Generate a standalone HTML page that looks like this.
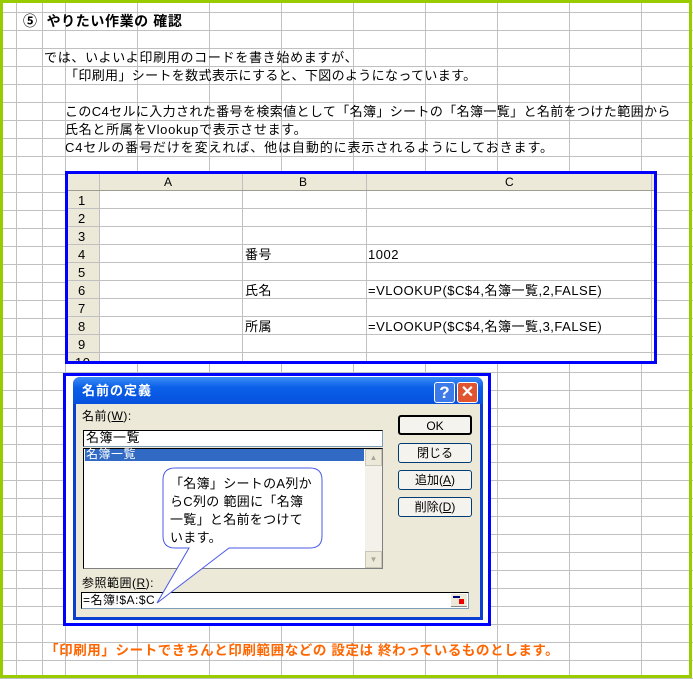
<!DOCTYPE html>
<html><head><meta charset="utf-8"><style>
*{margin:0;padding:0;box-sizing:border-box}
body{width:693px;height:679px;overflow:hidden;background:#fff;position:relative;font-family:"Liberation Sans","Noto Sans CJK JP",sans-serif;font-size:13px;color:#000}
.a{position:absolute;white-space:nowrap;line-height:16px;letter-spacing:0.5px}
.btn{position:absolute;left:398px;width:74px;height:20px;background:#F4F3EE;border:1px solid #003C74;border-radius:3px;text-align:center;line-height:18px;font-size:12px}
</style></head><body>
<svg width="693" height="679" style="position:absolute;left:0;top:0">
<g stroke="#C0C0C0" stroke-width="1">
<line x1="16.5" y1="0" x2="16.5" y2="679"/><line x1="42.5" y1="0" x2="42.5" y2="679"/><line x1="65.5" y1="0" x2="65.5" y2="679"/>
<line x1="137.5" y1="0" x2="137.5" y2="679"/><line x1="209.5" y1="0" x2="209.5" y2="679"/><line x1="281.5" y1="0" x2="281.5" y2="679"/><line x1="353.5" y1="0" x2="353.5" y2="679"/><line x1="425.5" y1="0" x2="425.5" y2="679"/><line x1="497.5" y1="0" x2="497.5" y2="679"/><line x1="569.5" y1="0" x2="569.5" y2="679"/><line x1="641.5" y1="0" x2="641.5" y2="679"/>
</g>
<g stroke="#C0C0C0" stroke-width="1" id="rows"></g>
<rect x="1.5" y="1.5" width="689" height="675" fill="none" stroke="#99CC00" stroke-width="3"/>
</svg>
<script>
var g=document.getElementById('rows'),s='';for(var n=0;n<=37;n++){var y=12+18*n+0.5;s+='<line x1="0" y1="'+y+'" x2="693" y2="'+y+'"/>';}g.innerHTML=s;
</script>
<div class="a" style="left:23px;top:13px;font-weight:bold;font-size:14px;letter-spacing:0.6px">⑤&nbsp; やりたい作業の 確認</div>
<div class="a" style="left:44px;top:50px;letter-spacing:0.7px">では、いよいよ印刷用のコードを書き始めますが、</div>
<div class="a" style="left:65px;top:68px;letter-spacing:0.35px">「印刷用」シートを数式表示にすると、下図のようになっています。</div>
<div class="a" style="left:65px;top:104px;letter-spacing:0.38px">このC4セルに入力された番号を検索値として「名簿」シートの「名簿一覧」と名前をつけた範囲から</div>
<div class="a" style="left:65px;top:122px;letter-spacing:0.7px">氏名と所属をVlookupで表示させます。</div>
<div class="a" style="left:65px;top:140px;letter-spacing:0.9px">C4セルの番号だけを変えれば、他は自動的に表示されるようにしておきます。</div>

<div style="position:absolute;left:65px;top:171px;width:592px;height:193px;border:3px solid #0000FF;background:#fff;overflow:hidden">
<svg width="586" height="187" style="position:absolute;left:0;top:0">
<rect x="0" y="0" width="586" height="16" fill="#ECE9D8"/>
<rect x="0" y="0" width="31" height="187" fill="#ECE9D8"/>
<g stroke="#C0C0C0"><line x1="0" y1="34.5" x2="586" y2="34.5"/><line x1="0" y1="52.5" x2="586" y2="52.5"/><line x1="0" y1="70.5" x2="586" y2="70.5"/><line x1="0" y1="88.5" x2="586" y2="88.5"/><line x1="0" y1="106.5" x2="586" y2="106.5"/><line x1="0" y1="124.5" x2="586" y2="124.5"/><line x1="0" y1="142.5" x2="586" y2="142.5"/><line x1="0" y1="160.5" x2="586" y2="160.5"/><line x1="0" y1="178.5" x2="586" y2="178.5"/>
<line x1="31.5" y1="0" x2="31.5" y2="187"/><line x1="174.5" y1="0" x2="174.5" y2="187"/><line x1="298.5" y1="0" x2="298.5" y2="187"/><line x1="583.5" y1="0" x2="583.5" y2="187"/></g>
<line x1="0" y1="16.5" x2="586" y2="16.5" stroke="#9D9D92"/>
</svg>
<div class="a" style="left:96px;top:0px;font-size:12px">A</div>
<div class="a" style="left:231px;top:0px;font-size:12px">B</div>
<div class="a" style="left:437px;top:0px;font-size:12px">C</div>
<div class="a" style="left:10px;top:19px">1</div><div class="a" style="left:10px;top:37px">2</div><div class="a" style="left:10px;top:55px">3</div><div class="a" style="left:10px;top:73px">4</div><div class="a" style="left:10px;top:91px">5</div><div class="a" style="left:10px;top:109px">6</div><div class="a" style="left:10px;top:127px">7</div><div class="a" style="left:10px;top:145px">8</div><div class="a" style="left:10px;top:163px">9</div><div class="a" style="left:7px;top:181px">10</div>
<div class="a" style="left:177px;top:73px">番号</div><div class="a" style="left:300px;top:73px">1002</div>
<div class="a" style="left:177px;top:109px">氏名</div><div class="a" style="left:300px;top:109px">=VLOOKUP($C$4,名簿一覧,2,FALSE)</div>
<div class="a" style="left:177px;top:145px">所属</div><div class="a" style="left:300px;top:145px">=VLOOKUP($C$4,名簿一覧,3,FALSE)</div>
</div>

<div style="position:absolute;left:63px;top:373px;width:428px;height:253px;border:3px solid #0000FF;background:#fff"></div>
<div style="position:absolute;left:73px;top:377px;width:410px;height:243px;background:#0A3FD0;border-radius:7px 7px 0 0"></div>
<div style="position:absolute;left:73px;top:377px;width:410px;height:27px;background:linear-gradient(#3A8CF6,#0A5FE8 40%,#0651DE);border-radius:7px 7px 0 0"></div>
<div class="a" style="left:82px;top:383px;color:#fff;font-weight:bold;font-size:13px;letter-spacing:1px">名前の定義</div>
<div style="position:absolute;left:434px;top:382px;width:21px;height:21px;background:#3D7AE9;border:1px solid #fff;border-radius:3px;color:#fff;font-weight:bold;font-size:17px;text-align:center;line-height:19px">?</div>
<div style="position:absolute;left:457px;top:382px;width:21px;height:21px;background:#E0542F;border:1px solid #fff;border-radius:3px;color:#fff;font-weight:bold;font-size:16px;text-align:center;line-height:19px">✕</div>
<div style="position:absolute;left:76px;top:404px;width:404px;height:213px;background:#ECE9D8"></div>
<div class="a" style="left:82px;top:408px;font-size:12px">名前(<u>W</u>):</div>
<div style="position:absolute;left:83px;top:430px;width:300px;height:17px;background:#fff;border:1px solid #7F9DB9;border-top-color:#000;border-left-color:#000"></div>
<div class="a" style="left:86px;top:430px;font-size:13px">名簿一覧</div>
<div style="position:absolute;left:83px;top:448px;width:300px;height:121px;background:#fff;border:1px solid #808080;border-top-color:#000;border-left-color:#000"></div>
<div style="position:absolute;left:85px;top:449px;width:279px;height:12px;background:#316AC5"></div>
<div class="a" style="left:86px;top:446px;color:#fff;font-size:12px">名簿一覧</div>
<div style="position:absolute;left:365px;top:449px;width:17px;height:119px;background:#F3F1EA"></div>
<div style="position:absolute;left:365px;top:449px;width:17px;height:17px;background:#ECE9D8;border:1px solid #C9C7BA;color:#A9A79A;font-size:8px;text-align:center;line-height:15px">▲</div>
<div style="position:absolute;left:365px;top:551px;width:17px;height:17px;background:#ECE9D8;border:1px solid #C9C7BA;color:#A9A79A;font-size:8px;text-align:center;line-height:15px">▼</div>
<div class="btn" style="top:415px;border:2px solid #000">OK</div>
<div class="btn" style="top:443px">閉じる</div>
<div class="btn" style="top:470px">追加(<u>A</u>)</div>
<div class="btn" style="top:497px">削除(<u>D</u>)</div>
<div class="a" style="left:82px;top:575px;font-size:12px">参照範囲(<u>R</u>):</div>
<div style="position:absolute;left:81px;top:592px;width:388px;height:17px;background:#fff;border:1px solid #7F9DB9;border-top-color:#000;border-left-color:#000"></div>
<div class="a" style="left:83px;top:592px;font-size:12px">=名簿!$A:$C</div>
<div style="position:absolute;left:451px;top:594px;width:16px;height:13px;background:#ECE9D8;border-bottom:1px solid #888"><div style="position:absolute;left:2px;top:2px;width:7px;height:2px;background:#000080"></div><div style="position:absolute;left:8px;top:5px;width:5px;height:5px;background:#E00"></div></div>

<svg width="693" height="679" style="position:absolute;left:0;top:0">
<path d="M175 468 H310 Q322 468 322 480 V536 Q322 548 310 548 H229 L157 603 L189 548 H175 Q163 548 163 536 V480 Q163 468 175 468 Z" fill="#fff" stroke="#4A5AE8" stroke-width="1"/>
</svg>
<div class="a" style="left:170px;top:475px;line-height:18px;white-space:normal;width:160px;letter-spacing:0.3px">「名簿」シートのA列か<br>らC列の 範囲に「名簿<br>一覧」と名前をつけて<br>います。</div>

<div class="a" style="left:45px;top:643px;color:#FF6600;font-weight:bold;font-size:13.5px;letter-spacing:0.6px">「印刷用」シートできちんと印刷範囲などの 設定は 終わっているものとします。</div>
</body></html>
